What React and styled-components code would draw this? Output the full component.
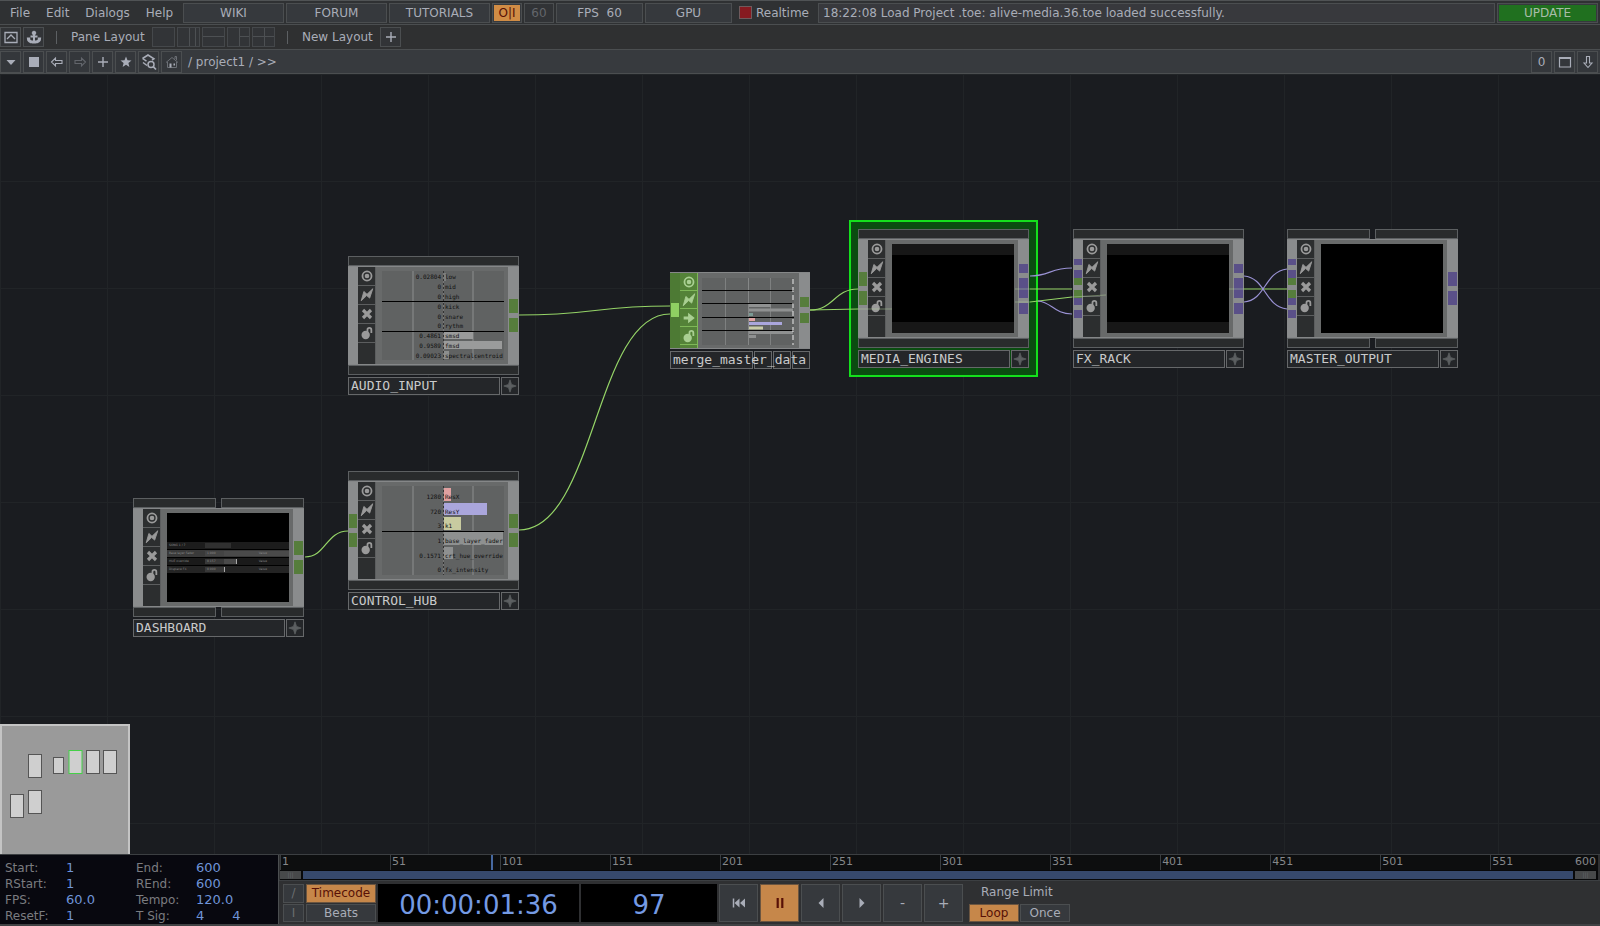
import React from "react";
import styled, { createGlobalStyle, css } from "styled-components";

const line = "#4b4e50";
const text = "#a9adb8";
const green = "#567d3c";
const violet = "#5a5088";
const wireGreen = "#95d467";
const wireViolet = "#9a92d4";

const GlobalStyle = createGlobalStyle`
  *, *::before, *::after { box-sizing: border-box; }
  body {
    margin: 0;
    background: #1a1c20;
    color: ${text};
    font-family: "DejaVu Sans", Verdana, sans-serif;
    font-size: 12px;
    line-height: 16px;
  }
  button, input { font: inherit; color: inherit; }
  button { padding: 0; margin: 0; cursor: pointer; white-space: nowrap; }
  svg { display: block; }
`;

const Page = styled.div`
  display: flex;
  flex-direction: column;
  min-height: 100vh;
`;

/* ---------- top bars ---------- */

const MenuBar = styled.header`
  display: flex;
  align-items: center;
  gap: 2px;
  height: 25px;
  padding: 0 2px 0 0;
  background: #2f3133;
  border-top: 1px solid #505355;
  border-bottom: 1px solid ${line};
`;

const Menus = styled.nav`
  display: flex;
  gap: 16px;
  width: 181px;
  padding-left: 10px;
`;

const MenuItem = styled.button`
  border: 0;
  background: none;
`;

const barBox = css`
  display: flex;
  align-items: center;
  justify-content: center;
  height: 20px;
  border: 1px solid ${line};
  background: #36393d;
`;

const BarLink = styled.a`
  ${barBox}
  width: 101px;
  color: ${text};
  text-decoration: none;
`;

const BarButton = styled.button`
  ${barBox}
  width: ${(p) => p.$w}px;
  white-space: pre;
  ${(p) => p.$dim && "color: #63666b; background: #313336;"}
`;

const FilledButton = styled(BarButton)`
  padding: 1px;
  span {
    flex: 1;
    height: 16px;
    background: ${(p) => p.$fill};
    color: ${(p) => p.$ink};
  }
`;

const Realtime = styled.label`
  display: flex;
  align-items: center;
  gap: 4px;
  width: 82px;
  padding-left: 5px;
`;

const RedCheck = styled.input`
  appearance: none;
  width: 13px;
  height: 13px;
  margin: 0;
  border: 1px solid #6f5a5c;
  background: #861a20;
`;

const Status = styled.output`
  ${barBox}
  flex: 1;
  min-width: 0;
  justify-content: flex-start;
  padding-left: 4px;
  white-space: nowrap;
  overflow: hidden;
  background: #38393d;
`;

const LayoutBar = styled.div`
  display: flex;
  align-items: center;
  height: 24px;
  background: #2f3031;
`;

const IconButton = styled.button`
  display: flex;
  align-items: center;
  justify-content: center;
  width: 21px;
  height: ${(p) => p.$h || 22}px;
  border: 1px solid ${line};
  background: ${(p) => (p.$h ? "#323437" : "#34373b")};
  color: ${(p) => (p.$dim ? "#62656b" : text)};
`;

const Group = styled.div`
  display: flex;
  align-items: center;
  gap: 2px;
`;

const Divider = styled.span`
  width: 1px;
  height: 13px;
  margin: 0 14px 0 12px;
  background: #5d6063;
`;

const BarText = styled.span`
  width: ${(p) => p.$w}px;
  white-space: nowrap;
`;

const LayoutButton = styled.button`
  width: 23px;
  height: 20px;
  border: 1px solid #45484b;
  background: #323437;
`;

const PathBar = styled.div`
  display: flex;
  align-items: center;
  justify-content: space-between;
  height: 25px;
  padding: 0 2px 0 0;
  background: #373a3e;
  border-top: 1px solid ${line};
  border-bottom: 1px solid ${line};
`;

const Path = styled.span`
  padding-left: 4px;
  white-space: pre;
`;

/* ---------- network canvas ---------- */

const Canvas = styled.main`
  position: relative;
  flex: 1;
  min-height: 780px;
  overflow: hidden;
  background-color: #1a1c20;
  background-image:
    linear-gradient(to right, #212427 1px, transparent 1px),
    linear-gradient(to bottom, #212427 1px, transparent 1px);
  background-size: 107px 107px;
  background-position: 0 0;
`;

const Wires = styled.svg`
  position: absolute;
  left: 0;
  top: 0;
  width: 100%;
  height: 100%;
  fill: none;
  pointer-events: none;
`;

const NodeBox = styled.article`
  position: absolute;
  left: ${(p) => p.$x}px;
  top: ${(p) => p.$y}px;
  width: ${(p) => p.$w || 171}px;
  ${(p) =>
    p.$selected &&
    "box-shadow: 0 0 0 7px #0a4c10, 0 0 0 9px #14e01c; background: #0a4c10;"}
`;

const Caps = styled.div`
  display: flex;
  gap: 5px;
  height: 10px;
  span {
    flex: 1;
    border: 1px solid #5c5f61;
    background: #292b2c;
  }
`;

const Body = styled.div`
  display: flex;
  height: ${(p) => p.$h || 99}px;
  border: 1px solid #858788;
  border-width: 1px 0;
  background: #5c5e5f;
`;

const Strip = styled.div`
  width: ${(p) => p.$w}px;
  padding: 0 1px;
  background: ${(p) => p.$bg || "#8a8c8d"};
`;

const Port = styled.div`
  height: ${(p) => p.$h}px;
  background: ${(p) => p.$bg};
`;

const Flags = styled.div`
  display: flex;
  flex-direction: column;
  gap: 1px;
  width: 18px;
  padding-right: 1px;
  background: ${(p) => (p.$chop ? "#7fb858" : "#5c5e5f")};
`;

const Flag = styled.button`
  display: flex;
  align-items: center;
  justify-content: center;
  height: ${(p) => (p.$chop ? 17 : 18)}px;
  border: 0;
  background: ${(p) => (p.$chop ? "#548238" : "#2c2e2f")};
  color: ${(p) => (p.$chop ? "#a9cf92" : "#9a9a9a")};
`;

const FlagRest = styled.span`
  flex: 1;
  background: ${(p) => (p.$chop ? "#548238" : "#2c2e2f")};
`;

const Viewer = styled.div`
  flex: 1;
  min-width: 0;
  padding: 4px 4px 4px 6px;
  background: #686a6a;
`;

const LabelRow = styled.div`
  display: flex;
  gap: 1px;
  height: 18px;
  margin-top: 2px;
`;

const NodeName = styled.h2`
  flex: 1;
  min-width: 0;
  margin: 0;
  padding: 0 2px;
  border: 1px solid #66686a;
  background: #242629;
  color: #c9cacb;
  font: 400 13px/16px "DejaVu Sans Mono", monospace;
  white-space: nowrap;
`;

const SmallBox = styled.button`
  display: flex;
  align-items: center;
  justify-content: center;
  width: 18px;
  border: 1px solid #66686a;
  background: #242629;
  color: #5c5f61;
`;

const Screen = styled.div`
  display: flex;
  flex-direction: column;
  justify-content: center;
  height: 100%;
  background: #000;
  ${(p) => p.$letterbox && "border: 11px solid #171717; border-width: 11px 0;"}
`;

/* channel viewer */

const Channels = styled.div`
  display: flex;
  flex-direction: column;
  height: 100%;
  padding-top: 1px;
  background:
    linear-gradient(#767878, #767878) 30px 0 / 2px 100% no-repeat,
    linear-gradient(#767878, #767878) 90px 0 / 2px 100% no-repeat,
    repeating-linear-gradient(#333 0 2px, #777 2px 4px) 61px 0 / 1px 100% no-repeat,
    #606262;
`;

const Channel = styled.div`
  display: flex;
  flex: 1;
  align-items: stretch;
  color: #101010;
  font: 6px/7px "DejaVu Sans Mono", monospace;
  white-space: nowrap;
  ${(p) => p.$rule && "box-shadow: 0 1px 0 #000;"}
`;

const ChannelValue = styled.span`
  display: flex;
  align-items: center;
  justify-content: flex-end;
  width: 62px;
  padding: ${(p) => (p.$tall ? 4 : 0)}px 3px 0 0;
`;

const ChannelName = styled.span`
  display: flex;
  flex: 1;
  min-width: 0;
  align-items: center;
  padding: ${(p) => (p.$tall ? 4 : 0)}px 0 0 1px;
  margin: 1px 0;
  background: linear-gradient(${(p) => p.$bar}, ${(p) => p.$bar}) 0 0 /
    ${(p) => p.$len || 0}px 100% no-repeat;
`;

/* dashboard preview */

const PanelRow = styled.div`
  display: flex;
  align-items: center;
  height: 7px;
  margin-bottom: 1px;
  background: ${(p) => p.$bg};
  color: #8a8a8a;
  font-size: 3px;
  line-height: 5px;
`;

const PanelCell = styled.span`
  width: ${(p) => p.$w}px;
  height: 5px;
  padding-left: 2px;
  background: ${(p) => p.$bg || "none"};
  white-space: nowrap;
  ${(p) => p.$edge && "border-right: 1px solid #aaa;"}
`;

const PanelTail = styled.span`
  flex: 1;
  height: 5px;
  padding-right: 22px;
  background: ${(p) => p.$bg || "none"};
  text-align: right;
`;

/* minimap */

const Minimap = styled.svg`
  position: absolute;
  left: 0;
  bottom: 0;
  width: 130px;
  height: 130px;
  background: #9a9a9a;
`;

/* ---------- bottom ---------- */

const Footer = styled.footer`
  display: flex;
  height: 72px;
  background: #2f3032;
  border-top: 1px solid #3c3f42;
  border-bottom: 2px solid #404244;
`;

const Info = styled.dl`
  display: grid;
  grid-template-columns: 61px 70px 60px 1fr;
  grid-auto-rows: 1fr;
  align-items: center;
  width: 278px;
  margin: 0;
  padding: 5px 4px 4px 5px;
  background: #08080f;
  dt { color: #7b7c80; }
  dd { margin: 0; color: #6f94d8; font-size: 13px; }
  dd span { margin-left: 28px; }
`;

const Timeline = styled.section`
  display: flex;
  flex: 1;
  min-width: 0;
  flex-direction: column;
  border-left: 1px solid ${line};
`;

const Ruler = styled.div`
  position: relative;
  display: flex;
  height: 15px;
  margin: 0 2px 0 1px;
  background: #0d0e0f;
  color: #85878a;
  font-size: 11px;
  line-height: 13px;
`;

const Tick = styled.span`
  display: flex;
  justify-content: space-between;
  flex: ${(p) => p.$n} 1 0;
  min-width: 0;
  box-shadow: inset 1px 0 0 #3a3d40;
  span { margin: 0 2px 0 2px; }
`;

const Playhead = styled.span`
  position: absolute;
  top: 0;
  bottom: 0;
  left: ${(p) => p.$at}%;
  width: 2px;
  background: #4668a0;
`;

const Range = styled.div`
  display: flex;
  gap: 2px;
  height: 10px;
  margin: 0 2px 0 1px;
  padding: 1px 2px 1px 0;
  background: #08090a;
`;

const Handle = styled.button`
  width: 21px;
  border: 0;
  background: #47494a;
  color: #66686a;
  font-size: 6px;
  line-height: 6px;
`;

const RangeFill = styled.div`
  flex: 1;
  background: #36496c;
`;

const Transport = styled.div`
  display: flex;
  flex: 1;
  align-items: stretch;
  gap: 2px;
  padding: 3px 4px 2px;
  border-top: 1px solid #3c3f42;
`;

const Stack = styled.div`
  display: flex;
  flex-direction: column;
  gap: 1px;
  width: ${(p) => p.$w}px;
  & > button { flex: 1; }
`;

const Toggle = styled.button`
  display: flex;
  align-items: center;
  justify-content: center;
  border: 1px solid ${(p) => (p.$on ? "#6b5540" : line)};
  background: ${(p) => (p.$on ? "#c6874a" : "#36393d")};
  color: ${(p) => (p.$on ? "#571006" : p.$dim ? "#6a6d70" : text)};
`;

const Readout = styled.output`
  display: flex;
  align-items: center;
  justify-content: center;
  width: ${(p) => p.$w}px;
  padding-top: 3px;
  background: #000;
  color: #749ae4;
  font-size: 26px;
  line-height: 32px;
`;

const Play = styled(Toggle)`
  width: 39px;
  font-size: 14px;
`;

const Limit = styled.div`
  display: flex;
  flex-direction: column;
  justify-content: space-between;
  padding-left: 4px;
  span { padding-left: 12px; }
`;

const LimitButtons = styled.div`
  display: flex;
  gap: 1px;
  button { width: 50px; height: 18px; }
`;

/* ---------- icons ---------- */

const Svg = ({ s = 18, children, ...rest }) => (
  <svg width={s} height={s} viewBox="0 0 18 18" fill="none" stroke="currentColor" aria-hidden="true" {...rest}>
    {children}
  </svg>
);

const icons = {
  pane: <Svg><path d="M3 4.5h12v10H3zM5 11l4-4 4 4" strokeWidth="1.3" /></Svg>,
  anchor: (
    <Svg>
      <circle cx="9" cy="5" r="1.8" fill="currentColor" />
      <path d="M9 6v7M5.500 8.500h7" strokeWidth="2" />
      <path d="M1.800 9.500h3.400v2C6 12.500 7.500 12.500 9 12.500s3 0 3.800-1v-2h3.400l-.4 3C14 15.500 11 15.500 9 15.500s-5 0-6.800-3z" fill="currentColor" stroke="none" />
    </Svg>
  ),
  plus: <Svg><path d="M9 4v10M4 9h10" strokeWidth="1.4" /></Svg>,
  down: <Svg><path d="M4.500 7h9L9 12z" fill="currentColor" stroke="none" /></Svg>,
  stop: <Svg><path d="M4 4h10v10H4z" fill="currentColor" stroke="none" /></Svg>,
  left: <Svg><path d="M3.500 9l4-4v2.500H14v3H7.500V13z" strokeWidth="1.100" /></Svg>,
  right: <Svg><path d="M14.500 9l-4-4v2.500H4v3h6.500V13z" strokeWidth="1.100" /></Svg>,
  star: <Svg><path d="M9 3.500l1.500 3.800 4 .2-3.100 2.600 1 4L9 11.800l-3.400 2.300 1-4-3.100-2.600 4-.2z" fill="currentColor" stroke="none" /></Svg>,
  search: (
    <Svg>
      <path d="M2.500 5.500L8 2l6 3.800-2 1.400M2.500 5.500l4 2.700M3 9.500l4 3" strokeWidth="1.500" />
      <circle cx="11" cy="11.500" r="3" strokeWidth="1.500" />
      <path d="M13.200 13.700L16 16.500" strokeWidth="1.700" />
    </Svg>
  ),
  home: (
    <Svg>
      <path d="M3 9.500L9 4.500l6 5M4.500 9v5.500h9V9" stroke="#6c7076" />
      <path d="M12 6V3.500h1.500v3.700" stroke="#6c7076" />
      <path d="M6.500 10.500h2v4h-2zM10.500 10.500h1.500v2h-1.500z" fill="currentColor" stroke="none" />
    </Svg>
  ),
  window: <Svg><path d="M3.500 4.500h11v9.500h-11z" strokeWidth="1.200" /><path d="M3 5h12" strokeWidth="2" /></Svg>,
  arrowDown: <Svg><path d="M7.500 3.500h3V10H13l-4 4.500L5 10h2.500z" strokeWidth="1.100" /></Svg>,
  target: <Svg s={16}><circle cx="9" cy="9" r="5.100" strokeWidth="2" /><circle cx="9" cy="9" r="2.600" fill="currentColor" stroke="none" /></Svg>,
  bolt: <Svg s={16}><path d="M2.500 15.500L5.500 5l3.500 3.200L15.500 2 12 12.500 8.600 9.600z" fill="currentColor" strokeWidth="1" /></Svg>,
  cross: <Svg s={16}><path d="M4.500 4.500l9 9M13.500 4.500l-9 9" strokeWidth="3.600" /></Svg>,
  arrow: <Svg s={16}><path d="M3 7.200h5V3L15.500 9 8 15v-4.200H3z" fill="currentColor" stroke="none" /></Svg>,
  lock: <Svg s={16}><circle cx="7.500" cy="11.300" r="4.700" fill="currentColor" stroke="none" /><path d="M9.500 8V5.500a2.200 2.200 0 0 1 4.400 0V9" strokeWidth="2" /></Svg>,
  spark: <Svg s={14}><path d="M9 1l2 6 6 2-6 2-2 6-2-6-6-2 6-2z" fill="currentColor" strokeWidth="1" /></Svg>,
  rewind: <Svg><path d="M3.500 4.500v9" strokeWidth="1.500" /><path d="M9.500 4.500v9L4.500 9zM15 4.500v9L10 9z" fill="currentColor" stroke="none" /></Svg>,
  pause: <Svg><path d="M6.700 4v10M11.300 4v10" strokeWidth="2.200" /></Svg>,
  back: <Svg><path d="M11.500 4v10L6.500 9z" fill="currentColor" stroke="none" /></Svg>,
  next: <Svg><path d="M6.500 4v10l5-5z" fill="currentColor" stroke="none" /></Svg>,
};

const paneShapes = [
  ["Single pane", ""],
  ["Three columns", "M11.500 0v18M17.500 0v18"],
  ["Two rows", "M0 8.500h22"],
  ["Split right", "M11.500 0v18M11.500 8.500h11"],
  ["Quad", "M0 8.500h22M11.500 0v18"],
];

/* ---------- node data ---------- */

const gap = (h) => [h, "transparent"];
const pair = (c) => [gap(32), [14, c], gap(5), [14, c]];
const tripleOut = [gap(24), [9, violet], gap(5), [20, violet], gap(5), [11, violet]];
const tripleIn = [
  gap(19), [6, violet], gap(5), [8, violet], [7, green], gap(5),
  [8, green], [7, violet], gap(5), [8, violet],
];

const audio = [
  ["0.02804", "low", "#7c7e7e", 2],
  ["0", "mid"],
  ["0", "high", "", 0, true],
  ["0", "kick"],
  ["0", "snare"],
  ["0", "rythm", "", 0, true],
  ["0.4861", "smsd", "#9a9b9b", 29],
  ["0.9589", "fmsd", "#9a9b9b", 58],
  ["0.09023", "spectralcentroid", "#8c8e8e", 5],
];

const control = [
  ["1280", "ResX", "#e0a0a0", 7],
  ["720", "ResY", "#aaa6dc", 43],
  ["3", "k1", "#c8cba0", 17, true],
  ["1", "base_layer_fader", "#8e9090", 59],
  ["0.1571", "crt_hue_override", "#8e9090", 9],
  ["0", "fx_intensity"],
];

const ChannelList = ({ rows, tall }) => (
  <Channels>
    {rows.map(([value, name, bar, len, rule]) => (
      <Channel key={name} $rule={rule}>
        <ChannelValue $tall={tall}>{value}</ChannelValue>
        <ChannelName $tall={tall} $bar={bar || "transparent"} $len={len}>{name}</ChannelName>
      </Channel>
    ))}
  </Channels>
);

const DashboardPreview = () => (
  <Screen>
    <PanelRow $bg="#1c1c1c"><PanelCell $w={38}>SONG 1 / 7</PanelCell><PanelCell $w={26} $bg="#303030" /></PanelRow>
    <PanelRow $bg="#3a3a3a"><PanelCell $w={38}>Base layer Fader</PanelCell><PanelCell $w={19} $bg="#444">1.000</PanelCell><PanelTail $bg="#4a4a4a">Value</PanelTail></PanelRow>
    <PanelRow $bg="#1a1a1a"><PanelCell $w={38}>HUE override</PanelCell><PanelCell $w={19} $bg="#383838">0.157</PanelCell><PanelCell $w={13} $bg="#4a4a4a" $edge /><PanelTail>Value</PanelTail></PanelRow>
    <PanelRow $bg="#242424"><PanelCell $w={38}>Displace FX</PanelCell><PanelCell $w={20} $bg="#383838" $edge>0.000</PanelCell><PanelTail>Value</PanelTail></PanelRow>
  </Screen>
);

const MergeChart = () => (
  <svg width="92" height="67" viewBox="0 0 92 67" role="img" aria-label="Merged channels">
    <path d="M0 0h92v67H0z" fill="#606262" />
    <path d="M23.500 0v67M68.500 0v67" stroke="#7e8080" />
    <path d="M46.500 0v67" stroke="#858787" />
    <path d="M47 27.500h22M47 32h44M47 54.500h44M47 58.500h7" stroke="#8f9191" strokeWidth="3" />
    <path d="M47 36.500h4" stroke="#7a9a94" strokeWidth="3" />
    <path d="M47 41.500h6" stroke="#e0a4a4" strokeWidth="3" />
    <path d="M47 45.500h33" stroke="#aaa6dc" strokeWidth="3" />
    <path d="M47 50h14" stroke="#c8cba8" strokeWidth="3" />
    <path d="M0 12.500h92M0 25.500h92M0 39.500h92M0 52.500h92" stroke="#050505" />
    <path d="M91 1v66" stroke="#eee" strokeDasharray="5 3" strokeWidth="1" />
  </svg>
);

const nodes = [
  { name: "AUDIO_INPUT", x: 348, y: 182, out: pair(green), view: <ChannelList rows={audio} /> },
  { name: "CONTROL_HUB", x: 348, y: 397, ins: pair(green), out: pair(green), view: <ChannelList rows={control} tall /> },
  { name: "DASHBOARD", x: 133, y: 424, split: true, out: pair(green), view: <DashboardPreview /> },
  { name: "MEDIA_ENGINES", x: 858, y: 155, selected: true, ins: pair(green), out: tripleOut, view: <Screen $letterbox /> },
  { name: "FX_RACK", x: 1073, y: 155, ins: tripleIn, out: tripleOut, view: <Screen $letterbox /> },
  { name: "MASTER_OUTPUT", x: 1287, y: 155, split: true, ins: tripleIn, out: pair(violet), view: <Screen /> },
];

const Ports = ({ list = [], bg, w }) => (
  <Strip $bg={bg} $w={w}>
    {list.map(([h, c], i) => <Port key={i} $h={h} $bg={c} />)}
  </Strip>
);

const FlagColumn = ({ chop }) => (
  <Flags $chop={chop}>
    <Flag $chop={chop} aria-label="Viewer">{icons.target}</Flag>
    <Flag $chop={chop} aria-label="Cooking">{icons.bolt}</Flag>
    <Flag $chop={chop} aria-label="Bypass">{chop ? icons.arrow : icons.cross}</Flag>
    <Flag $chop={chop} aria-label="Lock">{icons.lock}</Flag>
    <FlagRest $chop={chop} />
  </Flags>
);

const Node = ({ name, x, y, split, selected, ins, out, view }) => (
  <NodeBox $x={x} $y={y} $selected={selected}>
    <Caps><span />{split && <span />}</Caps>
    <Body>
      <Ports list={ins} w={10} />
      <FlagColumn />
      <Viewer>{view}</Viewer>
      <Ports list={out} w={11} />
    </Body>
    <Caps><span />{split && <span />}</Caps>
    <LabelRow>
      <NodeName>{name}</NodeName>
      <SmallBox aria-label="Activate viewer">{icons.spark}</SmallBox>
    </LabelRow>
  </NodeBox>
);

const MergeName = styled(NodeName)`
  flex: 0 0 83px;
  padding-right: 0;
  overflow: visible;
  span { position: relative; z-index: 1; }
`;

const MergeViewer = styled(Viewer)`
  padding: 5px 4px;
`;

const MergeNode = () => (
  <NodeBox $x={670} $y={198} $w={140}>
    <Body $h={77}>
      <Ports bg="#4d7a34" w={10} list={[gap(30), [14, "#8fd062"]]} />
      <FlagColumn chop />
      <MergeViewer><MergeChart /></MergeViewer>
      <Ports w={11} list={[gap(24), [10, green], gap(6), [10, green]]} />
    </Body>
    <LabelRow>
      <MergeName><span>merge_master_data</span></MergeName>
      <SmallBox aria-label="Flag 1" />
      <SmallBox aria-label="Flag 2" />
      <SmallBox aria-label="Flag 3" />
    </LabelRow>
  </NodeBox>
);

const mapNodes = [
  [28, 30, 13, 23], [53, 33, 10, 16], [86, 26, 13, 23],
  [103, 26, 13, 23], [10, 70, 13, 23], [28, 66, 13, 23],
];

const info = [
  ["Start:", "1", "End:", "600"],
  ["RStart:", "1", "REnd:", "600"],
  ["FPS:", "60.0", "Tempo:", "120.0"],
  ["ResetF:", "1", "T Sig:", "4", "4"],
];

const ticks = [1, 51, 101, 151, 201, 251, 301, 351, 401, 451, 501, 551];

export default function App() {
  return (
    <Page>
      <GlobalStyle />
      <MenuBar>
        <Menus>
          {["File", "Edit", "Dialogs", "Help"].map((m) => <MenuItem key={m}>{m}</MenuItem>)}
        </Menus>
        {["WIKI", "FORUM", "TUTORIALS"].map((l) => <BarLink key={l} href="#">{l}</BarLink>)}
        <FilledButton $w={30} $fill="#d08c45" $ink="#571006"><span>O|I</span></FilledButton>
        <BarButton $w={30} $dim>60</BarButton>
        <BarButton $w={87}>{"FPS  60"}</BarButton>
        <BarButton $w={87}>GPU</BarButton>
        <Realtime><RedCheck type="checkbox" defaultChecked />Realtime</Realtime>
        <Status>18:22:08 Load Project .toe: alive-media.36.toe loaded successfully.</Status>
        <FilledButton $w={101} $fill="#20701f" $ink="#a9bda9"><span>UPDATE</span></FilledButton>
      </MenuBar>

      <LayoutBar>
        <Group>
          <IconButton $h={20} aria-label="Pane options">{icons.pane}</IconButton>
          <IconButton $h={20} aria-label="Bookmark layout">{icons.anchor}</IconButton>
        </Group>
        <Divider />
        <BarText $w={81}>Pane Layout</BarText>
        <Group>
          {paneShapes.map(([label, d]) => (
            <LayoutButton key={label} aria-label={label}>
              <svg width="21" height="18" stroke="#4d5053" fill="none"><path d={d} /></svg>
            </LayoutButton>
          ))}
        </Group>
        <Divider />
        <BarText $w={78}>New Layout</BarText>
        <IconButton $h={20} aria-label="Add layout">{icons.plus}</IconButton>
      </LayoutBar>

      <PathBar>
        <Group>
          <IconButton aria-label="Pane type">{icons.down}</IconButton>
          <IconButton aria-label="Stop">{icons.stop}</IconButton>
          <IconButton aria-label="Back">{icons.left}</IconButton>
          <IconButton $dim aria-label="Forward">{icons.right}</IconButton>
          <IconButton aria-label="Add operator">{icons.plus}</IconButton>
          <IconButton aria-label="Bookmarks">{icons.star}</IconButton>
          <IconButton aria-label="Search network">{icons.search}</IconButton>
          <IconButton aria-label="Home">{icons.home}</IconButton>
          <Path>{"/ project1 / >>"}</Path>
        </Group>
        <Group>
          <IconButton>0</IconButton>
          <IconButton aria-label="Maximize">{icons.window}</IconButton>
          <IconButton aria-label="Collapse">{icons.arrowDown}</IconButton>
        </Group>
      </PathBar>

      <Canvas>
        {nodes.map((n) => <Node key={n.name} {...n} />)}
        <MergeNode />
        <Wires strokeWidth="1.2">
          <g stroke={wireGreen}>
            <path d="M519 241C595 241 595 232 670 232" />
            <path d="M519 456C595 456 595 240 670 240" />
            <path d="M305 483C326 483 326 457 348 457" />
            <path d="M810 236C834 236 834 215 858 215" />
            <path d="M810 236L858 235" />
            <path d="M1030 215H1072M1030 228L1072 223M1244 215H1287" />
          </g>
          <g stroke={wireViolet}>
            <path d="M1030 202C1050 202 1050 194 1072 194" />
            <path d="M1038 227C1052 228 1054 240 1072 240" />
            <path d="M1244 202C1266 204 1264 232 1287 235" />
            <path d="M1244 228C1266 226 1264 198 1287 195" />
          </g>
          <g stroke="#b8d8a0" opacity=".45">
            <path d="M858 235H892M1015 215H1030M1015 228H1030M1072 223L1106 221M1229 215H1244" />
          </g>
        </Wires>
        <Minimap viewBox="0 0 130 130" aria-label="Network overview">
          <path d="M1 130V1h128v129" fill="none" stroke="#c4c4c4" strokeWidth="2" />
          {mapNodes.map(([x, y, w, h]) => (
            <rect key={`${x}-${y}`} x={x + 0.5} y={y + 0.5} width={w} height={h} fill="#cfcfcf" stroke="#555" />
          ))}
          <rect x="69" y="26.500" width="13" height="23" fill="#cfcfcf" stroke="#45d048" />
        </Minimap>
      </Canvas>

      <Footer>
        <Info>
          {info.map(([a, b, c, d, e]) => (
            <React.Fragment key={a}>
              <dt>{a}</dt><dd>{b}</dd><dt>{c}</dt><dd>{d}{e && <span>{e}</span>}</dd>
            </React.Fragment>
          ))}
        </Info>
        <Timeline>
          <Ruler>
            {ticks.map((t) => (
              <Tick key={t} $n={t === 551 ? 49 : 50}><span>{t}</span>{t === 551 && <span>600</span>}</Tick>
            ))}
            <Playhead $at={16} />
          </Ruler>
          <Range>
            <Handle aria-label="Range start">|||</Handle>
            <RangeFill />
            <Handle aria-label="Range end">|||</Handle>
          </Range>
          <Transport>
            <Stack $w={21}><Toggle $dim>/</Toggle><Toggle $dim>I</Toggle></Stack>
            <Stack $w={70}>
              <Toggle $on aria-pressed="true">Timecode</Toggle>
              <Toggle aria-pressed="false">Beats</Toggle>
            </Stack>
            <Readout $w={201}>00:00:01:36</Readout>
            <Readout $w={136}>97</Readout>
            <Play aria-label="Jump to start">{icons.rewind}</Play>
            <Play $on aria-label="Pause">{icons.pause}</Play>
            <Play aria-label="Step back">{icons.back}</Play>
            <Play aria-label="Step forward">{icons.next}</Play>
            <Play aria-label="Decrease">-</Play>
            <Play aria-label="Increase">+</Play>
            <Limit>
              <span>Range Limit</span>
              <LimitButtons>
                <Toggle $on aria-pressed="true">Loop</Toggle>
                <Toggle aria-pressed="false">Once</Toggle>
              </LimitButtons>
            </Limit>
          </Transport>
        </Timeline>
      </Footer>
    </Page>
  );
}
